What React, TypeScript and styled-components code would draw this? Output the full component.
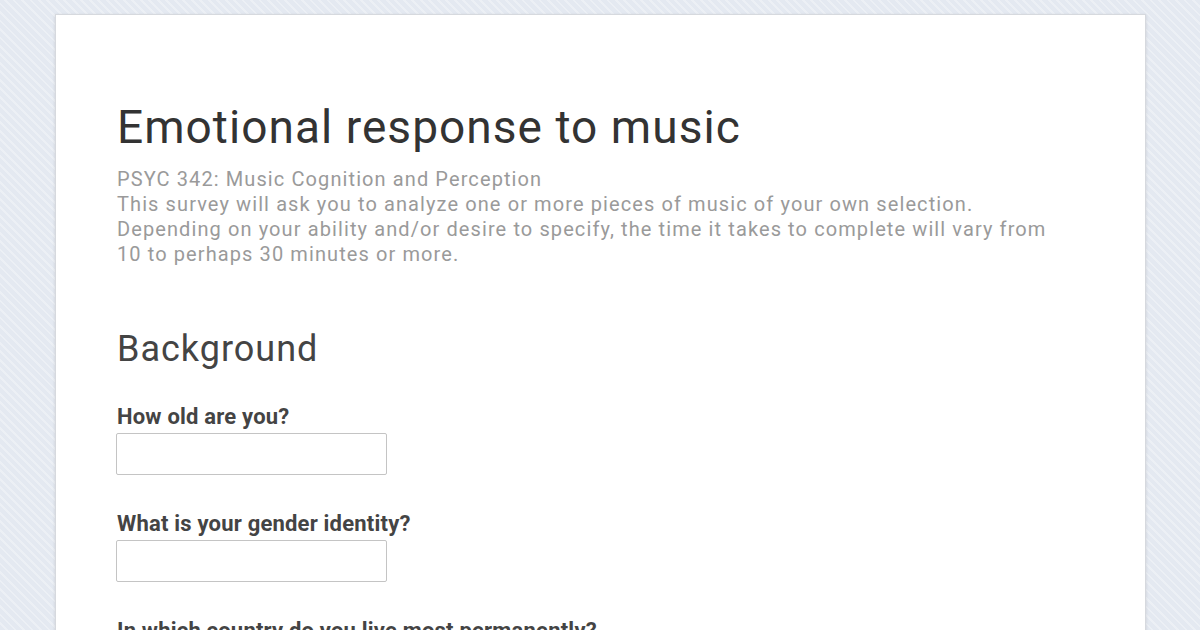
import React from "react";
import styled, { createGlobalStyle } from "styled-components";

const Global = createGlobalStyle`
  html, body {
    margin: 0;
    padding: 0;
  }
  body {
    width: 1200px;
    height: 630px;
    overflow: hidden;
    font-family: Roboto, "Noto Sans", "Liberation Sans", sans-serif;
    background-color: #e4e9f1;
    background-image: repeating-linear-gradient(
      45deg,
      rgba(255, 255, 255, 0) 0px,
      rgba(255, 255, 255, 0) 4px,
      rgba(255, 255, 255, 0.3) 4px,
      rgba(255, 255, 255, 0.3) 6px
    );
  }
`;

const Page = styled.div`
  padding: 14px 0 0 55px;
`;

const Card = styled.main`
  width: 1091px;
  min-height: 700px;
  box-sizing: border-box;
  background: #ffffff;
  border: 1px solid #d6d9de;
  box-shadow: 0 1px 3px rgba(0, 0, 0, 0.12);
  padding: 85px 62px 0 61px;
`;

const Title = styled.h1`
  margin: 0;
  font-size: 46px;
  line-height: 54px;
  font-weight: 400;
  letter-spacing: 1.05px;
  color: #333333;
`;

const Description = styled.div`
  margin: 13px 0 0;
  font-size: 20px;
  line-height: 25px;
  letter-spacing: 1.1px;
  color: #9a9a9a;
  width: 950px;
`;

const Section = styled.h2`
  margin: 62px 0 0;
  font-size: 36px;
  line-height: 40px;
  font-weight: 400;
  letter-spacing: 1px;
  color: #444444;
`;

const Question = styled.div<{ $first?: boolean }>`
  margin-top: ${(p) => (p.$first ? "36px" : "37px")};
  display: flex;
  flex-direction: column;
  align-items: flex-start;
`;

const Label = styled.label`
  font-size: 22px;
  line-height: 24px;
  font-weight: 700;
  letter-spacing: 0.2px;
  color: #444444;
  margin-bottom: 4px;
`;

const Input = styled.input`
  box-sizing: border-box;
  width: 271px;
  height: 42px;
  margin: 0 0 0 -1px;
  border: 1px solid #c4c4c4;
  border-radius: 2px;
  background: #ffffff;
  outline: none;
`;

export default function App() {
  return (
    <>
      <Global />
      <Page>
        <Card>
          <Title>Emotional response to music</Title>
          <Description>
            PSYC 342: Music Cognition and Perception
            <br />
            This survey will ask you to analyze one or more pieces of music of your own selection.
            <br />
            Depending on your ability and/or desire to specify, the time it takes to complete will vary from
            10 to perhaps 30 minutes or more.
          </Description>
          <Section>Background</Section>
          <Question $first>
            <Label>How old are you?</Label>
            <Input type="text" />
          </Question>
          <Question>
            <Label>What is your gender identity?</Label>
            <Input type="text" />
          </Question>
          <Question>
            <Label>In which country do you live most permanently?</Label>
            <Input type="text" />
          </Question>
        </Card>
      </Page>
    </>
  );
}
